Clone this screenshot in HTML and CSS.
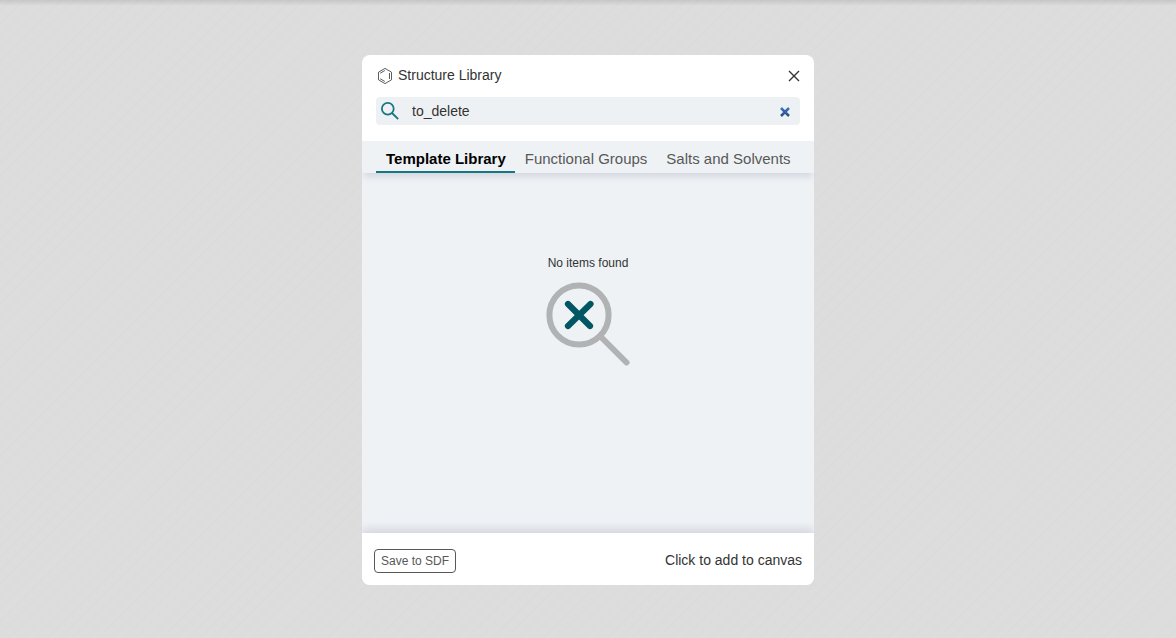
FILE: index.html
```html
<!DOCTYPE html>
<html lang="en">
<head>
<meta charset="utf-8">
<meta name="viewport" content="width=device-width, initial-scale=1">
<title>Structure Library</title>
<link rel="stylesheet" href="styles.css">
</head>
<body class="page">
<main class="dialog" role="dialog" aria-labelledby="dialog-title">
  <header class="header">
    <svg class="header-icon" viewBox="0 0 16 18" fill="none" stroke="#333" aria-hidden="true">
      <path d="M8.500 1.400 15 5.200V12.800L8.500 16.600 2 12.800V5.200Z" stroke-width=".8"/>
      <path d="M13 6V12M8.300 3.600 3.700 6.200M8.300 14.400 3.700 11.800" stroke-width=".8"/>
    </svg>
    <h1 class="title" id="dialog-title">Structure Library</h1>
    <button class="icon-button close" type="button" aria-label="Close">
      <svg viewBox="0 0 12 12" width="12" height="12" fill="none" stroke="#333" stroke-width="1.4"><path d="M1 1 11 11M11 1 1 11"/></svg>
    </button>
  </header>
  <div class="search">
    <svg class="search-icon" viewBox="0 0 20 20" fill="none" stroke="#167782" stroke-width="1.8" aria-hidden="true"><circle cx="7.800" cy="7.800" r="5.900"/><path d="M12 12 18.200 18.200"/></svg>
    <input class="search-input" type="text" aria-label="Search by elements" value="to_delete">
    <button class="icon-button" type="button" aria-label="Clear search">
      <svg viewBox="0 0 10 12" width="10" height="12" fill="none" stroke="url(#clear-fill)" stroke-width="2.500"><defs><linearGradient id="clear-fill" gradientUnits="userSpaceOnUse" x1="0" y1="2" x2="0" y2="12"><stop offset="0" stop-color="#4078c8"/><stop offset="1" stop-color="#284880"/></linearGradient></defs><path d="M1 3 9 11M9 3 1 11"/></svg>
    </button>
  </div>
  <nav class="tabs" role="tablist">
    <button class="tab tab-active" type="button" role="tab" aria-selected="true">Template Library</button>
    <button class="tab" type="button" role="tab" aria-selected="false">Functional Groups</button>
    <button class="tab" type="button" role="tab" aria-selected="false">Salts and Solvents</button>
  </nav>
  <section class="content">
    <p class="empty-text">No items found</p>
    <svg class="empty-icon" viewBox="0 0 84 84" fill="none" stroke-linecap="round" aria-hidden="true">
      <circle cx="33" cy="33" r="29.600" stroke="#b0b2b4" stroke-width="6"/>
      <path d="M54.500 54.500 80.500 80.500" stroke="#b0b2b4" stroke-width="6"/>
      <path d="M22 22 44 44M44.500 22 22 44" stroke="#005662" stroke-width="6.200"/>
    </svg>
  </section>
  <footer class="footer">
    <button class="save" type="button">Save to SDF</button>
    <span class="hint">Click to add to canvas</span>
  </footer>
</main>
</body>
</html>
```
FILE: styles.css
```css
* { box-sizing: border-box; }

.page {
  margin: 0;
  min-height: 100vh;
  padding-top: 2px;
  display: flex;
  align-items: center;
  justify-content: center;
  font-family: "Liberation Sans", Arial, sans-serif;
  font-size: 14px;
  color: #333;
  background:
    linear-gradient(rgba(0, 0, 0, .1), rgba(0, 0, 0, 0) 6px),
    repeating-linear-gradient(135deg, #dddddd 0, #dddddd 6px, #dbdbdb 8px, #dddddd 9px);
}

button, input {
  font: inherit;
  color: inherit;
  border: 0;
  padding: 0;
  background: none;
}

.dialog {
  width: 100%;
  max-width: 452px;
  border-radius: 8px;
  background: #fff;
  overflow: hidden;
}

.header {
  display: flex;
  align-items: center;
  gap: 5px;
  padding: 12px 14px;
}

.header-icon {
  width: 17px;
  height: 18px;
}

.title {
  flex: 1;
  margin: 0 0 2px;
  font-size: 14px;
  line-height: 16px;
  font-weight: 400;
}

.icon-button {
  display: flex;
  cursor: pointer;
}

.close { width: 12px; }

.search {
  display: flex;
  align-items: center;
  height: 28px;
  margin: 0 14px 16px;
  padding: 0 10px 0 4px;
  border-radius: 4px;
  background: #eef1f4;
}

.search-icon {
  width: 20px;
  height: 20px;
}

.search-input {
  flex: 1;
  min-width: 0;
  padding-left: 12px;
  outline: none;
}

.tabs {
  display: flex;
  position: relative;
  padding: 0 14px;
  background: #eef2f5;
  box-shadow: 0 6px 6px -2px rgba(103, 104, 132, .18);
}

.tab {
  height: 32px;
  padding: 4px 9px 0 10px;
  border-bottom: 2px solid transparent;
  font-size: 15px;
  color: #585858;
  white-space: nowrap;
}

.tab-active {
  border-color: #167782;
  font-weight: 700;
  color: #000;
}

.content {
  display: flex;
  flex-direction: column;
  align-items: center;
  min-height: 360px;
  padding-top: 82px;
  background: #eef2f5;
}

.empty-text {
  margin: 0 0 11px;
  font-size: 12px;
  line-height: 16px;
}

.empty-icon {
  width: 84px;
  height: 84px;
}

.footer {
  display: flex;
  position: relative;
  align-items: center;
  justify-content: space-between;
  padding: 16px 12px 12px;
  min-height: 52px;
  background: #fff;
  box-shadow: 0 -4px 8px rgba(103, 104, 132, .2);
}

.save {
  height: 24px;
  padding: 0 6px;
  border: 1px solid #585858;
  border-radius: 4px;
  font-size: 12px;
  color: #585858;
}

.hint {
  padding-bottom: 2px;
  line-height: 18px;
}
```
